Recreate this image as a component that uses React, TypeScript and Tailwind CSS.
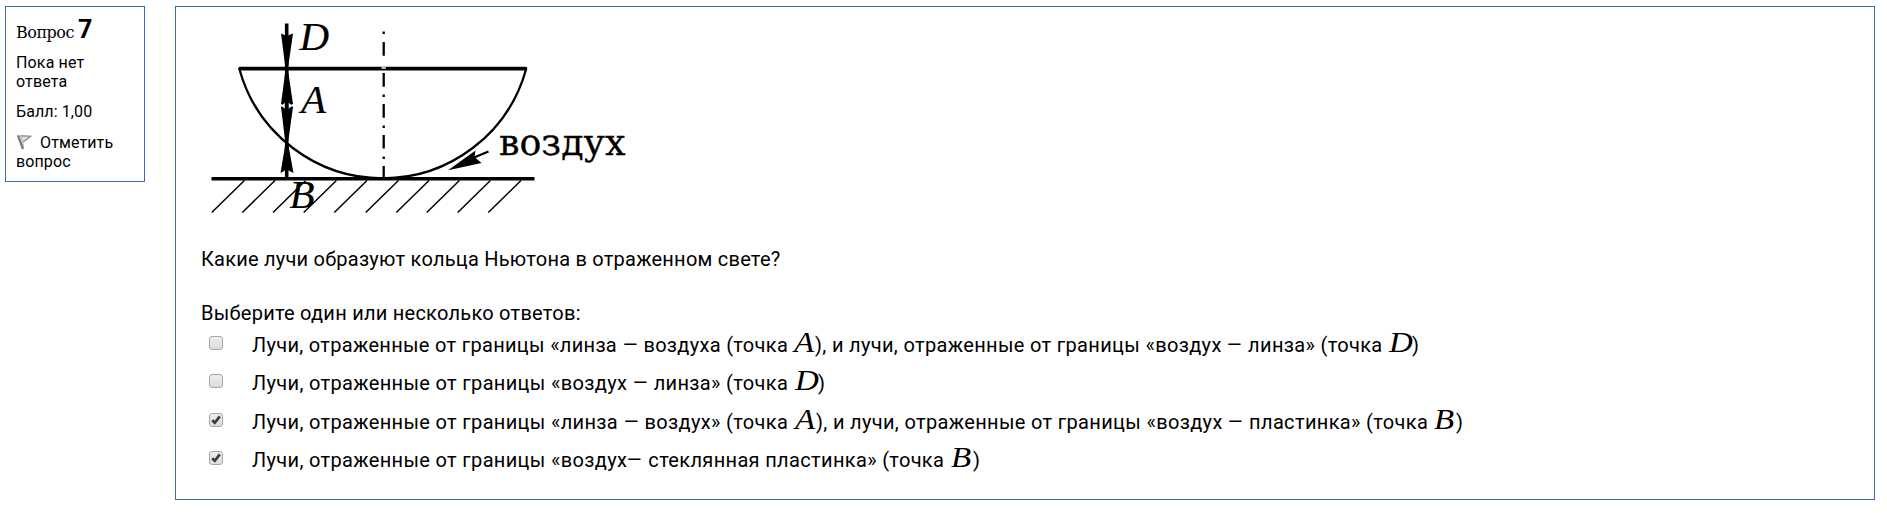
import React from 'react';

function Diagram() {
  const hatches = [211.7, 242.3, 273, 303.7, 334.3, 365.7, 396.3, 426.7, 457.7, 488.3];
  return (
    <svg className="block" width="440" height="240" viewBox="202 7 440 240">
      <g fill="none" stroke="#000">
        <path d="M240 68.7H525.5" strokeWidth="3.7" strokeLinecap="round" />
        <path d="M239.5 69.5A148.7 148.7 0 0 0 526 69.5" strokeWidth="2.3" />
        <path d="M211.5 178.8H534.5" strokeWidth="3.6" />
        <path d="M286.7 23.5V179" strokeWidth="3.6" />
        {hatches.map((x) => (
          <path key={x} d={`M${x} 212.5L${x + 32.7} 180.5`} strokeWidth="1.5" />
        ))}
        <path
          d="M383.7 31.5v2.6M383.7 42v13.7M383.7 73v13.7M383.7 94.4v2.6M383.7 104v13.7M383.7 125.4v2.6M383.7 135v13.5M383.7 156.4v2.6M383.7 166v12"
          strokeWidth="2.3"
        />
        <path d="M488.5 151.5L474 157.5" strokeWidth="2.4" />
      </g>
      <path d="M381.5 66.8h4.4v2h-4.4z" fill="#fff" opacity=".8" />
      <path d="M285.2 66L281 33.5L286.7 36L293 33.5L288.3 66z" />
      <path d="M285.5 70L281 104l3 1.5h5.5L293 104L288 70z" />
      <path d="M285.2 141L281 107l3-1.5h5.5L293 107L288.3 141z" />
      <path d="M285.5 143L280.5 173L286.7 169.5L293.5 173L288 143z" />
      <path d="M281.5 105.7l3.2-3v6zM292 105.7l-3.2-3v6z" fill="#fff" />
      <path d="M448 170.3L475.5 150.5L474.5 157L481.5 163z" />
      <g className="font-['Liberation_Serif',serif] text-[41px] italic" fill="#000" stroke="#000" strokeWidth=".2">
        <text x="299.5" y="50.3">D</text>
        <text x="301" y="112.8">A</text>
        <text x="289.5" y="207.8">B</text>
      </g>
      <text
        className="font-['DejaVu_Serif',serif] text-[35px]"
        x="499"
        y="155"
        textLength="126.5"
        lengthAdjust="spacingAndGlyphs"
        stroke="#000"
        strokeWidth=".3"
      >
        воздух
      </text>
    </svg>
  );
}

function Flag() {
  return (
    <svg className="mr-[7px] inline-block align-[-2px]" width="17" height="16" viewBox="0 0 17 16">
      <path d="M2 1.3L7 15" stroke="#777" strokeWidth="2.3" fill="none" />
      <path d="M4.2 1.9L15 2.2L7 7.8" stroke="#999" strokeWidth="1.6" fill="#e4e4e4" strokeLinejoin="round" />
      <path d="M5.2 2.5L7.8 13" stroke="#bbb" strokeWidth="1.2" fill="none" />
    </svg>
  );
}

function Checkbox({ checked }: { checked?: boolean }) {
  return (
    <span
      role="checkbox"
      aria-checked={!!checked}
      className="-mt-1 flex size-[14px] shrink-0 items-center justify-center rounded-[3px] border border-[#a8a8a8] bg-linear-to-b from-[#eeeeee] to-[#dcdcdc]"
    >
      {checked && (
        <svg width="12" height="12" viewBox="0 0 12 12">
          <path d="M2.2 6.2L4.8 8.8L9.8 2.4" fill="none" stroke="#3c3c3c" strokeWidth="2.7" />
        </svg>
      )}
    </span>
  );
}

function Sym({ children }: { children: string }) {
  return (
    <span className="inline-block origin-left scale-x-110 font-['Liberation_Serif',serif] text-[30px] leading-[18px] tracking-normal italic">
      {children}
    </span>
  );
}

function Dash() {
  return <span className="mx-[1.2px] inline-block scale-x-125 leading-none">–</span>;
}

export default function App() {
  return (
    <div className="flex h-[513px] items-start bg-white pt-[6px] pl-[5px] font-[Roboto,sans-serif] text-black">
      <aside className="h-[176px] w-[140px] shrink-0 border border-[#3a6cb0] pt-[8px] pl-[10px] text-[16px] leading-[19px]">
        <h3 className="flex h-[30px] items-baseline gap-1 font-['DejaVu_Serif',serif] text-[16px] leading-[30px]">
          <span className="tracking-[-0.5px]">Вопрос</span>
          <span className="font-[Roboto,sans-serif] text-[25px] font-bold">7</span>
        </h3>
        <div className="mt-[8px] w-[100px] tracking-[0.15px]">Пока нет ответа</div>
        <div className="mt-[11px] tracking-[0.1px]">Балл: 1,00</div>
        <div className="mt-[12px] w-[110px] tracking-[0.12px]">
          <Flag />
          Отметить вопрос
        </div>
      </aside>

      <main className="ml-[30px] h-[494px] w-[1700px] shrink-0 border border-[#3a6cb0] pl-[26px] text-[20px] leading-6">
        <Diagram />
        <p className="-ml-px tracking-[0.23px]">Какие лучи образуют кольца Ньютона в отраженном свете?</p>
        <p className="mt-[30px] -ml-px tracking-[0.25px]">Выберите один или несколько ответов:</p>
        <div className="mt-px tracking-[0.34px] whitespace-nowrap">
          <label className="flex h-[38px] items-center pl-[7px]">
            <Checkbox />
            <span className="ml-[29px] flex items-baseline">
              <span className="w-[542px] tracking-[0.31px]">Лучи, отраженные от границы «линза <Dash /> воздуха (точка</span>
              <span className="w-[21px]"><Sym>A</Sym></span>
              <span className="w-[574px]">), и лучи, отраженные от границы «воздух <Dash /> линза» (точка</span>
              <span className="w-[23px]"><Sym>D</Sym></span>
              <span>)</span>
            </span>
          </label>
          <label className="flex h-[38px] items-center pl-[7px]">
            <Checkbox />
            <span className="ml-[29px] flex items-baseline">
              <span className="w-[543px]">Лучи, отраженные от границы «воздух <Dash /> линза» (точка</span>
              <span className="w-[23px]"><Sym>D</Sym></span>
              <span>)</span>
            </span>
          </label>
          <label className="mt-px flex h-[38px] items-center pl-[7px]">
            <Checkbox checked />
            <span className="ml-[29px] flex items-baseline">
              <span className="w-[543px]">Лучи, отраженные от границы «линза <Dash /> воздух» (точка</span>
              <span className="w-[21px]"><Sym>A</Sym></span>
              <span className="w-[618px]">), и лучи, отраженные от границы «воздух <Dash /> пластинка» (точка</span>
              <span className="w-[22px]"><Sym>B</Sym></span>
              <span>)</span>
            </span>
          </label>
          <label className="flex h-[38px] items-center pl-[7px]">
            <Checkbox checked />
            <span className="ml-[29px] flex items-baseline">
              <span className="w-[699px]">Лучи, отраженные от границы «воздух<Dash /> стеклянная пластинка» (точка</span>
              <span className="w-[22px]"><Sym>B</Sym></span>
              <span>)</span>
            </span>
          </label>
        </div>
      </main>
    </div>
  );
}
